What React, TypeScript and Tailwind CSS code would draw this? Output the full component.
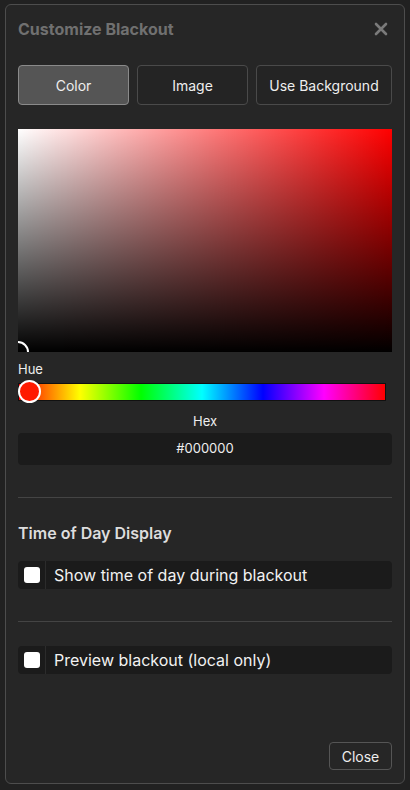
import React from "react";

export default function App() {
  return (
    <div className="w-[410px] h-[790px] bg-[#212121] pt-[4px] pl-[5px] font-['Inter','Liberation_Sans',sans-serif]">
      <div className="w-[400px] h-[780px] border border-[#4d4d4d] rounded-[6px] bg-[#262626] px-[12px] flex flex-col">
        <div className="flex items-center justify-between h-[48px]">
          <div className="text-[16px] font-bold text-[#707070]">Customize Blackout</div>
          <svg width="14" height="14" viewBox="0 0 14 14" className="mr-[4px]">
            <path d="M2 2 L12 12 M12 2 L2 12" stroke="#7a7a7a" strokeWidth="2.6" strokeLinecap="round" />
          </svg>
        </div>
        <div className="flex gap-[8px] mt-[12px]">
          <button className="w-[111px] h-[40px] rounded-[4px] bg-[#555555] border border-[#8a8a8a] text-[14px] text-[#eeeeee]">Color</button>
          <button className="w-[111px] h-[40px] rounded-[4px] bg-[#242424] border border-[#4a4a4a] text-[14px] text-[#eeeeee]">Image</button>
          <button className="flex-1 h-[40px] rounded-[4px] bg-[#242424] border border-[#4a4a4a] text-[14px] text-[#eeeeee]">Use Background</button>
        </div>
        <div className="relative mt-[24px] h-[223px] overflow-hidden bg-[#ff0000]">
          <div className="absolute inset-0 bg-[linear-gradient(to_right,#ffffff,rgba(255,255,255,0))]" />
          <div className="absolute inset-0 bg-[linear-gradient(to_top,#000000,rgba(0,0,0,0))]" />
          <div className="absolute left-[-11px] bottom-[-11px] w-[22px] h-[22px] rounded-full border-[2px] border-white" />
        </div>
        <div className="text-[13px] text-[#eeeeee] mt-[9px] leading-[16px]">Hue</div>
        <div className="relative mt-[6px] h-[18px] w-[368px]">
          <div className="absolute inset-0 border border-[#111] bg-[linear-gradient(to_right,#ff0000,#ffff00,#00ff00,#00ffff,#0000ff,#ff00ff,#ff0000)]" />
          <div className="absolute left-[0px] top-[-3px] w-[23px] h-[23px] rounded-full border-[2px] border-white bg-[#ff1a00]" />
        </div>
        <div className="text-[13px] text-[#eeeeee] text-center mt-[12px] leading-[16px]">Hex</div>
        <div className="mt-[4px] h-[32px] rounded-[4px] bg-[#1b1b1b] flex items-center justify-center text-[13px] text-[#eeeeee]">#000000</div>
        <div className="mt-[32px] h-px bg-[#444444]" />
        <div className="mt-[25px] text-[16px] font-semibold text-[#dddddd] leading-[20px]">Time of Day Display</div>
        <div className="mt-[18px] h-[28px] rounded-[4px] bg-[#1b1b1b] flex items-stretch">
          <div className="w-[28px] flex items-center justify-center border-r border-[#2c2c2c]">
            <div className="w-[16px] h-[16px] rounded-[3px] bg-white" />
          </div>
          <div className="flex items-center pl-[8px] text-[16px] text-[#f2f2f2]">Show time of day during blackout</div>
        </div>
        <div className="mt-[32px] h-px bg-[#444444]" />
        <div className="mt-[24px] h-[28px] rounded-[4px] bg-[#1b1b1b] flex items-stretch">
          <div className="w-[28px] flex items-center justify-center border-r border-[#2c2c2c]">
            <div className="w-[16px] h-[16px] rounded-[3px] bg-white" />
          </div>
          <div className="flex items-center pl-[8px] text-[16px] text-[#f2f2f2]">Preview blackout (local only)</div>
        </div>
        <div className="flex-1" />
        <div className="flex justify-end mb-[13px]">
          <button className="w-[63px] h-[28px] rounded-[4px] border border-[#555555] bg-[#262626] text-[14px] text-[#eeeeee]">Close</button>
        </div>
      </div>
    </div>
  );
}
